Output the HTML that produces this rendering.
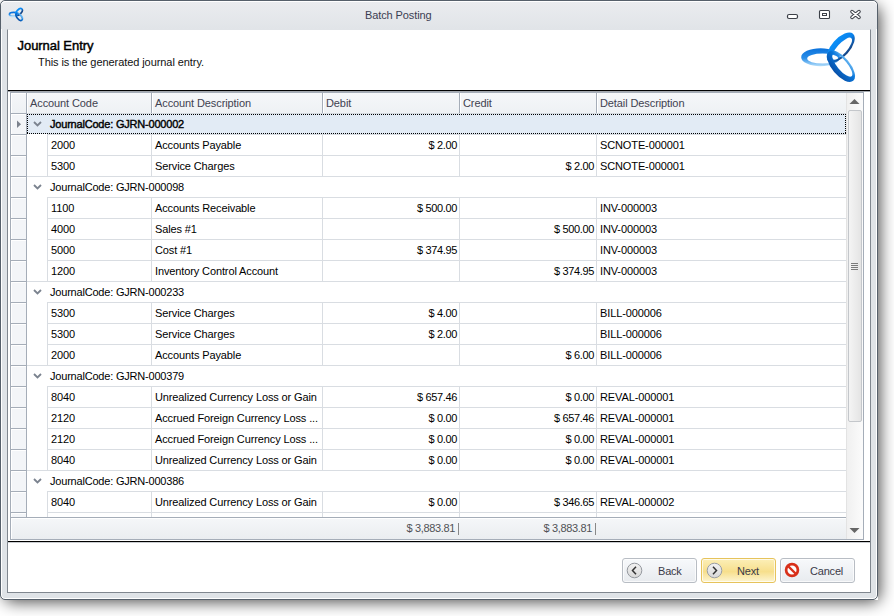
<!DOCTYPE html>
<html><head><meta charset="utf-8">
<style>
*{margin:0;padding:0;box-sizing:border-box}
html,body{width:894px;height:616px;overflow:hidden;background:#fff;font-family:"Liberation Sans",sans-serif;font-size:11px;color:#1b1b1b}
.abs{position:absolute}
#win{position:absolute;left:0;top:0;width:878px;height:600px;border:1px solid #56606b;border-radius:5px;background:#dfe3e7;box-shadow:inset 0 0 0 1px #fff}
#title{position:absolute;left:0;top:0;width:876px;height:28px;border-top:1px solid #fff;background:linear-gradient(#eaecef,#e1e4e8);border-radius:5px 5px 0 0}
#ttext{position:absolute;left:365px;top:9px;font-size:11px;color:#3b3d52;letter-spacing:-0.1px}
#inner{position:absolute;left:7px;top:29px;width:864px;height:564px;background:#fff;border:1px solid #80878f;border-top-color:#e1e4e8}
#sep1{position:absolute;left:8px;top:90px;width:862px;height:1px;background:#000}
#sep1b{position:absolute;left:8px;top:91px;width:862px;height:1px;background:#a3a8ae}
#sep2{position:absolute;left:8px;top:541px;width:862px;height:1px;background:#000}
#sep2b{position:absolute;left:8px;top:542px;width:862px;height:1px;background:#c9ccd0}
#grid{position:absolute;left:10px;top:92px;width:854px;height:448px;border:1px solid #a5adb8;background:#fff}
#hdr{position:absolute;left:11px;top:93px;width:835px;height:20px;background:linear-gradient(#f5f7f9,#eef1f4)}
.hc{position:absolute;top:0;height:20px;border-left:1px solid #a5adb8;padding-left:3px;padding-top:1px;line-height:19px;color:#3f4250;letter-spacing:-0.1px;box-shadow:inset 1px 0 0 #fff}
#data{position:absolute;left:0;top:0;width:846px;height:517px;overflow:hidden}
.ind{position:absolute;left:11px;width:16px;height:21px;background:#f3f5f8;border-top:1px solid #a5adb8;border-right:1px solid #a5adb8;box-shadow:inset 1px 1px 0 #fff}
.grp{position:absolute;left:27px;width:819px;height:20px}
.sel{background:#e2ebf5}
.gt{position:absolute;left:50px;height:20px;line-height:20px;color:#000;letter-spacing:-0.2px}
.gt.b{-webkit-text-stroke:0.4px #000}
.dh{position:absolute;height:1px;background:repeating-linear-gradient(to right,#000 0 1px,transparent 1px 2px)}
.dv{position:absolute;width:1px;background:repeating-linear-gradient(to bottom,#000 0 1px,transparent 1px 2px)}
.t{position:absolute;height:20px;line-height:20px;white-space:nowrap;color:#000;letter-spacing:-0.12px}
.r{text-align:right;padding-right:1px;letter-spacing:-0.35px}
.hl{position:absolute;height:1px;background:#d9dde2}
.vl{position:absolute;width:1px;height:21px;background:#d9dde2}
#foot{position:absolute;left:11px;top:517px;width:835px;height:22px;border-top:1px solid #a5adb8;background:linear-gradient(#f5f7f9,#eaedf0);box-shadow:inset 1px 1px 0 #fff}
.ft{position:absolute;top:0;height:21px;line-height:21px;color:#505256;text-align:right;letter-spacing:-0.35px}
#sb{position:absolute;left:846px;top:93px;width:17px;height:446px;background:linear-gradient(to right,#f0f0f0,#fbfbfb);border-left:1px solid #e3e3e3}
.btn{position:absolute;top:558px;width:75px;height:25px;border:1px solid #b8bdc4;border-radius:3px;background:linear-gradient(#f7f9fb,#e8ebef);box-shadow:inset 0 0 0 1px rgba(255,255,255,0.7)}
.btn .bt{position:absolute;top:1px;height:23px;line-height:23px;color:#3a3a48;font-size:11px;letter-spacing:-0.2px}
</style></head><body>
<div id="shadow" style="position:absolute;left:4px;top:6px;width:876px;height:596px;border-radius:8px;background:rgba(0,0,0,0.7);filter:blur(8px)"></div>
<div style="position:absolute;left:874px;top:596px;width:4px;height:4px;background:#fff"></div>
<div id="win">
 <div id="title"></div>
</div>
<div id="ttext">Batch Posting</div>
<!-- small logo icon -->
<svg width="0" height="0" style="position:absolute">
 <defs>
  <linearGradient id="lg1" x1="0" y1="0" x2="0" y2="1"><stop offset="0" stop-color="#0a72dc"/><stop offset="0.55" stop-color="#2a8ee8"/><stop offset="1" stop-color="#b4defa"/></linearGradient>
  <linearGradient id="lg2" x1="0" y1="0" x2="0" y2="1"><stop offset="0" stop-color="#0a90f8"/><stop offset="0.55" stop-color="#0a80ea"/><stop offset="1" stop-color="#173f7c"/></linearGradient>
  <linearGradient id="lg3" x1="0" y1="0" x2="0" y2="1"><stop offset="0" stop-color="#6ab8f2"/><stop offset="0.35" stop-color="#0a78dc"/><stop offset="1" stop-color="#0850a8"/></linearGradient>
  <g id="logo">
   <path fill="url(#lg1)" fill-rule="evenodd" d="M801.2 57.2 a19.4 9 0 1 0 38.8 0 a19.4 9 0 1 0 -38.8 0 Z M807.2 58.6 a15.5 5.0 0 1 0 31 0 a15.5 5.0 0 1 0 -31 0 Z"/>
   <g transform="translate(840.75 47.5) rotate(-48.4)">
    <path fill="url(#lg2)" fill-rule="evenodd" d="M-18.5 0 a18.5 9 0 1 0 37 0 a18.5 9 0 1 0 -37 0 Z M-14 1.7 a14 5.0 0 1 0 28 0 a14 5.0 0 1 0 -28 0 Z"/>
   </g>
   <g transform="translate(841 66.25) rotate(49.9)">
    <path fill="url(#lg3)" fill-rule="evenodd" d="M-19 0 a19 9 0 1 0 38 0 a19 9 0 1 0 -38 0 Z M-14.5 -1.7 a14.5 5.0 0 1 0 29 0 a14.5 5.0 0 1 0 -29 0 Z"/>
   </g>
  </g>
 </defs>
</svg>
<svg class="abs" style="left:6px;top:6px" width="20" height="18" viewBox="6 6 20 18">
 <ellipse cx="13.73" cy="14.45" rx="4.3" ry="2.0" fill="none" stroke="url(#lg1)" stroke-width="1.7"/>
 <ellipse cx="19.09" cy="11.9" rx="4.1" ry="2.25" transform="rotate(-48.4 19.09 11.9)" fill="none" stroke="url(#lg2)" stroke-width="1.7"/>
 <ellipse cx="19.16" cy="16.85" rx="4.2" ry="2.25" transform="rotate(49.9 19.16 16.85)" fill="none" stroke="url(#lg3)" stroke-width="1.7"/>
</svg>
<!-- window buttons -->
<svg class="abs" style="left:786px;top:13px" width="13" height="7"><rect x="1.5" y="1.5" width="10" height="4" rx="1.5" fill="#fff" stroke="#3c4048" stroke-width="1.2"/></svg>
<svg class="abs" style="left:818px;top:9px" width="13" height="11"><rect x="1.5" y="1.5" width="10" height="8" rx="1" fill="#fff" stroke="#3c4048" stroke-width="1.1"/><rect x="4.5" y="4.5" width="4" height="2" fill="#fff" stroke="#3c4048" stroke-width="1"/></svg>
<svg class="abs" style="left:849px;top:9px" width="13" height="11"><path d="M3 2.6 L10 8.4 M3 8.4 L10 2.6" fill="none" stroke="#3c4048" stroke-width="3.6" stroke-linecap="round"/><path d="M3 2.6 L10 8.4 M3 8.4 L10 2.6" fill="none" stroke="#fff" stroke-width="1.5" stroke-linecap="round"/></svg>
<div id="inner"></div>
<div class="abs" style="left:17.5px;top:38px;font-size:13px;color:#000;-webkit-text-stroke:0.45px #000;letter-spacing:-0.05px">Journal Entry</div>
<div class="abs" style="left:38px;top:56px;font-size:11px;color:#111;letter-spacing:-0.07px">This is the generated journal entry.</div>
<!-- big logo -->
<svg class="abs" style="left:798px;top:29px" width="60" height="57" viewBox="798 29 60 57"><use href="#logo"/></svg>
<div id="sep1"></div><div id="sep1b"></div>
<div id="grid"></div>
<div id="hdr">
 <div class="hc" style="left:0;width:16px;border-left:none;box-shadow:inset 1px 1px 0 #fff"></div>
 <div class="hc" style="left:15px;width:125px">Account Code</div>
 <div class="hc" style="left:140px;width:171px">Account Description</div>
 <div class="hc" style="left:311px;width:137px">Debit</div>
 <div class="hc" style="left:448px;width:137px">Credit</div>
 <div class="hc" style="left:585px;width:250px">Detail Description</div>
</div>
<div id="data">
<div class="hl" style="left:27px;width:819px;top:113px;background:#d3d8de"></div>
<div class="ind" style="top:113px"></div>
<svg class="abs" style="left:16px;top:119px" width="6" height="10"><path d="M1 1.5 L5 5.2 L1 9 Z" fill="#7b828d"/></svg>
<div class="grp sel" style="top:114px"></div>
<div class="dh" style="left:27px;top:114px;width:819px"></div><div class="dh" style="left:27px;top:133px;width:819px"></div><div class="dv" style="left:27px;top:114px;height:20px"></div><div class="dv" style="left:845px;top:114px;height:20px"></div>
<svg class="abs chev" style="left:33px;top:121px" width="9" height="6"><path d="M1 1 L4.5 4.5 L8 1" fill="none" stroke="#7b838f" stroke-width="1.8"/></svg>
<div class="gt b" style="top:114px">JournalCode: GJRN-000002</div>
<div class="hl" style="left:47px;width:799px;top:134px"></div>
<div class="ind" style="top:134px"></div>
<div class="vl" style="left:47px;top:134px"></div>
<div class="vl" style="left:151px;top:134px"></div>
<div class="vl" style="left:322px;top:134px"></div>
<div class="vl" style="left:459px;top:134px"></div>
<div class="vl" style="left:596px;top:134px"></div>
<div class="t" style="left:51px;top:135px">2000</div>
<div class="t" style="left:155px;top:135px">Accounts Payable</div>
<div class="t r" style="left:322px;width:136px;top:135px">$ 2.00</div>
<div class="t r" style="left:459px;width:136px;top:135px"></div>
<div class="t" style="left:600px;top:135px">SCNOTE-000001</div>
<div class="hl" style="left:47px;width:799px;top:155px"></div>
<div class="ind" style="top:155px"></div>
<div class="vl" style="left:47px;top:155px"></div>
<div class="vl" style="left:151px;top:155px"></div>
<div class="vl" style="left:322px;top:155px"></div>
<div class="vl" style="left:459px;top:155px"></div>
<div class="vl" style="left:596px;top:155px"></div>
<div class="t" style="left:51px;top:156px">5300</div>
<div class="t" style="left:155px;top:156px">Service Charges</div>
<div class="t r" style="left:322px;width:136px;top:156px"></div>
<div class="t r" style="left:459px;width:136px;top:156px">$ 2.00</div>
<div class="t" style="left:600px;top:156px">SCNOTE-000001</div>
<div class="hl" style="left:27px;width:819px;top:176px"></div>
<div class="ind" style="top:176px"></div>
<svg class="abs chev" style="left:33px;top:184px" width="9" height="6"><path d="M1 1 L4.5 4.5 L8 1" fill="none" stroke="#7b838f" stroke-width="1.8"/></svg>
<div class="gt" style="top:177px">JournalCode: GJRN-000098</div>
<div class="hl" style="left:47px;width:799px;top:197px"></div>
<div class="ind" style="top:197px"></div>
<div class="vl" style="left:47px;top:197px"></div>
<div class="vl" style="left:151px;top:197px"></div>
<div class="vl" style="left:322px;top:197px"></div>
<div class="vl" style="left:459px;top:197px"></div>
<div class="vl" style="left:596px;top:197px"></div>
<div class="t" style="left:51px;top:198px">1100</div>
<div class="t" style="left:155px;top:198px">Accounts Receivable</div>
<div class="t r" style="left:322px;width:136px;top:198px">$ 500.00</div>
<div class="t r" style="left:459px;width:136px;top:198px"></div>
<div class="t" style="left:600px;top:198px">INV-000003</div>
<div class="hl" style="left:47px;width:799px;top:218px"></div>
<div class="ind" style="top:218px"></div>
<div class="vl" style="left:47px;top:218px"></div>
<div class="vl" style="left:151px;top:218px"></div>
<div class="vl" style="left:322px;top:218px"></div>
<div class="vl" style="left:459px;top:218px"></div>
<div class="vl" style="left:596px;top:218px"></div>
<div class="t" style="left:51px;top:219px">4000</div>
<div class="t" style="left:155px;top:219px">Sales #1</div>
<div class="t r" style="left:322px;width:136px;top:219px"></div>
<div class="t r" style="left:459px;width:136px;top:219px">$ 500.00</div>
<div class="t" style="left:600px;top:219px">INV-000003</div>
<div class="hl" style="left:47px;width:799px;top:239px"></div>
<div class="ind" style="top:239px"></div>
<div class="vl" style="left:47px;top:239px"></div>
<div class="vl" style="left:151px;top:239px"></div>
<div class="vl" style="left:322px;top:239px"></div>
<div class="vl" style="left:459px;top:239px"></div>
<div class="vl" style="left:596px;top:239px"></div>
<div class="t" style="left:51px;top:240px">5000</div>
<div class="t" style="left:155px;top:240px">Cost #1</div>
<div class="t r" style="left:322px;width:136px;top:240px">$ 374.95</div>
<div class="t r" style="left:459px;width:136px;top:240px"></div>
<div class="t" style="left:600px;top:240px">INV-000003</div>
<div class="hl" style="left:47px;width:799px;top:260px"></div>
<div class="ind" style="top:260px"></div>
<div class="vl" style="left:47px;top:260px"></div>
<div class="vl" style="left:151px;top:260px"></div>
<div class="vl" style="left:322px;top:260px"></div>
<div class="vl" style="left:459px;top:260px"></div>
<div class="vl" style="left:596px;top:260px"></div>
<div class="t" style="left:51px;top:261px">1200</div>
<div class="t" style="left:155px;top:261px">Inventory Control Account</div>
<div class="t r" style="left:322px;width:136px;top:261px"></div>
<div class="t r" style="left:459px;width:136px;top:261px">$ 374.95</div>
<div class="t" style="left:600px;top:261px">INV-000003</div>
<div class="hl" style="left:27px;width:819px;top:281px"></div>
<div class="ind" style="top:281px"></div>
<svg class="abs chev" style="left:33px;top:289px" width="9" height="6"><path d="M1 1 L4.5 4.5 L8 1" fill="none" stroke="#7b838f" stroke-width="1.8"/></svg>
<div class="gt" style="top:282px">JournalCode: GJRN-000233</div>
<div class="hl" style="left:47px;width:799px;top:302px"></div>
<div class="ind" style="top:302px"></div>
<div class="vl" style="left:47px;top:302px"></div>
<div class="vl" style="left:151px;top:302px"></div>
<div class="vl" style="left:322px;top:302px"></div>
<div class="vl" style="left:459px;top:302px"></div>
<div class="vl" style="left:596px;top:302px"></div>
<div class="t" style="left:51px;top:303px">5300</div>
<div class="t" style="left:155px;top:303px">Service Charges</div>
<div class="t r" style="left:322px;width:136px;top:303px">$ 4.00</div>
<div class="t r" style="left:459px;width:136px;top:303px"></div>
<div class="t" style="left:600px;top:303px">BILL-000006</div>
<div class="hl" style="left:47px;width:799px;top:323px"></div>
<div class="ind" style="top:323px"></div>
<div class="vl" style="left:47px;top:323px"></div>
<div class="vl" style="left:151px;top:323px"></div>
<div class="vl" style="left:322px;top:323px"></div>
<div class="vl" style="left:459px;top:323px"></div>
<div class="vl" style="left:596px;top:323px"></div>
<div class="t" style="left:51px;top:324px">5300</div>
<div class="t" style="left:155px;top:324px">Service Charges</div>
<div class="t r" style="left:322px;width:136px;top:324px">$ 2.00</div>
<div class="t r" style="left:459px;width:136px;top:324px"></div>
<div class="t" style="left:600px;top:324px">BILL-000006</div>
<div class="hl" style="left:47px;width:799px;top:344px"></div>
<div class="ind" style="top:344px"></div>
<div class="vl" style="left:47px;top:344px"></div>
<div class="vl" style="left:151px;top:344px"></div>
<div class="vl" style="left:322px;top:344px"></div>
<div class="vl" style="left:459px;top:344px"></div>
<div class="vl" style="left:596px;top:344px"></div>
<div class="t" style="left:51px;top:345px">2000</div>
<div class="t" style="left:155px;top:345px">Accounts Payable</div>
<div class="t r" style="left:322px;width:136px;top:345px"></div>
<div class="t r" style="left:459px;width:136px;top:345px">$ 6.00</div>
<div class="t" style="left:600px;top:345px">BILL-000006</div>
<div class="hl" style="left:27px;width:819px;top:365px"></div>
<div class="ind" style="top:365px"></div>
<svg class="abs chev" style="left:33px;top:373px" width="9" height="6"><path d="M1 1 L4.5 4.5 L8 1" fill="none" stroke="#7b838f" stroke-width="1.8"/></svg>
<div class="gt" style="top:366px">JournalCode: GJRN-000379</div>
<div class="hl" style="left:47px;width:799px;top:386px"></div>
<div class="ind" style="top:386px"></div>
<div class="vl" style="left:47px;top:386px"></div>
<div class="vl" style="left:151px;top:386px"></div>
<div class="vl" style="left:322px;top:386px"></div>
<div class="vl" style="left:459px;top:386px"></div>
<div class="vl" style="left:596px;top:386px"></div>
<div class="t" style="left:51px;top:387px">8040</div>
<div class="t" style="left:155px;top:387px">Unrealized Currency Loss or Gain</div>
<div class="t r" style="left:322px;width:136px;top:387px">$ 657.46</div>
<div class="t r" style="left:459px;width:136px;top:387px">$ 0.00</div>
<div class="t" style="left:600px;top:387px">REVAL-000001</div>
<div class="hl" style="left:47px;width:799px;top:407px"></div>
<div class="ind" style="top:407px"></div>
<div class="vl" style="left:47px;top:407px"></div>
<div class="vl" style="left:151px;top:407px"></div>
<div class="vl" style="left:322px;top:407px"></div>
<div class="vl" style="left:459px;top:407px"></div>
<div class="vl" style="left:596px;top:407px"></div>
<div class="t" style="left:51px;top:408px">2120</div>
<div class="t" style="left:155px;top:408px">Accrued Foreign Currency Loss ...</div>
<div class="t r" style="left:322px;width:136px;top:408px">$ 0.00</div>
<div class="t r" style="left:459px;width:136px;top:408px">$ 657.46</div>
<div class="t" style="left:600px;top:408px">REVAL-000001</div>
<div class="hl" style="left:47px;width:799px;top:428px"></div>
<div class="ind" style="top:428px"></div>
<div class="vl" style="left:47px;top:428px"></div>
<div class="vl" style="left:151px;top:428px"></div>
<div class="vl" style="left:322px;top:428px"></div>
<div class="vl" style="left:459px;top:428px"></div>
<div class="vl" style="left:596px;top:428px"></div>
<div class="t" style="left:51px;top:429px">2120</div>
<div class="t" style="left:155px;top:429px">Accrued Foreign Currency Loss ...</div>
<div class="t r" style="left:322px;width:136px;top:429px">$ 0.00</div>
<div class="t r" style="left:459px;width:136px;top:429px">$ 0.00</div>
<div class="t" style="left:600px;top:429px">REVAL-000001</div>
<div class="hl" style="left:47px;width:799px;top:449px"></div>
<div class="ind" style="top:449px"></div>
<div class="vl" style="left:47px;top:449px"></div>
<div class="vl" style="left:151px;top:449px"></div>
<div class="vl" style="left:322px;top:449px"></div>
<div class="vl" style="left:459px;top:449px"></div>
<div class="vl" style="left:596px;top:449px"></div>
<div class="t" style="left:51px;top:450px">8040</div>
<div class="t" style="left:155px;top:450px">Unrealized Currency Loss or Gain</div>
<div class="t r" style="left:322px;width:136px;top:450px">$ 0.00</div>
<div class="t r" style="left:459px;width:136px;top:450px">$ 0.00</div>
<div class="t" style="left:600px;top:450px">REVAL-000001</div>
<div class="hl" style="left:27px;width:819px;top:470px"></div>
<div class="ind" style="top:470px"></div>
<svg class="abs chev" style="left:33px;top:478px" width="9" height="6"><path d="M1 1 L4.5 4.5 L8 1" fill="none" stroke="#7b838f" stroke-width="1.8"/></svg>
<div class="gt" style="top:471px">JournalCode: GJRN-000386</div>
<div class="hl" style="left:47px;width:799px;top:491px"></div>
<div class="ind" style="top:491px"></div>
<div class="vl" style="left:47px;top:491px"></div>
<div class="vl" style="left:151px;top:491px"></div>
<div class="vl" style="left:322px;top:491px"></div>
<div class="vl" style="left:459px;top:491px"></div>
<div class="vl" style="left:596px;top:491px"></div>
<div class="t" style="left:51px;top:492px">8040</div>
<div class="t" style="left:155px;top:492px">Unrealized Currency Loss or Gain</div>
<div class="t r" style="left:322px;width:136px;top:492px">$ 0.00</div>
<div class="t r" style="left:459px;width:136px;top:492px">$ 346.65</div>
<div class="t" style="left:600px;top:492px">REVAL-000002</div>
<div class="hl" style="left:47px;width:799px;top:512px"></div>
<div class="ind" style="top:512px"></div>
<div class="vl" style="left:47px;top:512px"></div>
<div class="vl" style="left:151px;top:512px"></div>
<div class="vl" style="left:322px;top:512px"></div>
<div class="vl" style="left:459px;top:512px"></div>
<div class="vl" style="left:596px;top:512px"></div>
<div class="t" style="left:51px;top:513px"></div>
<div class="t" style="left:155px;top:513px"></div>
<div class="t r" style="left:322px;width:136px;top:513px"></div>
<div class="t r" style="left:459px;width:136px;top:513px"></div>
<div class="t" style="left:600px;top:513px"></div>
<div class="hl" style="left:27px;width:819px;top:533px"></div>
</div>
<div id="foot">
 <div class="ft" style="left:311px;width:133px">$ 3,883.81</div>
 <div class="abs" style="left:447px;top:5px;width:1px;height:12px;background:#888"></div>
 <div class="ft" style="left:448px;width:133px">$ 3,883.81</div>
 <div class="abs" style="left:584px;top:5px;width:1px;height:12px;background:#888"></div>
</div>
<div id="sb">
 <svg class="abs" style="left:2px;top:5px" width="11" height="7"><path d="M0.5 6 L5.5 1 L10.5 6 Z" fill="#666"/></svg>
 <div class="abs" style="left:1px;top:17px;width:14px;height:312px;border:1px solid #c4c7cb;border-radius:2px;background:linear-gradient(to right,#f4f4f4,#e4e4e4)"></div>
 <svg class="abs" style="left:4px;top:170px" width="8" height="8"><path d="M0 0.5h7M0 2.5h7M0 4.5h7M0 6.5h7" stroke="#7a7a7a" stroke-width="1"/></svg>
 <svg class="abs" style="left:2px;top:434px" width="11" height="7"><path d="M0.5 1 L5.5 6 L10.5 1 Z" fill="#666"/></svg>
</div>
<div id="sep2"></div><div id="sep2b"></div>
<!-- buttons -->
<div class="btn" style="left:622px">
 <svg class="abs" style="left:3.3px;top:3.3px" width="17" height="17"><circle cx="8.5" cy="8.5" r="7.3" fill="url(#cg)" stroke="#94989e" stroke-width="1"/><path d="M10 4.8 L6.5 8.5 L10 12.2" fill="none" stroke="#333" stroke-width="1.5"/><defs><linearGradient id="cg" x1="0" y1="0" x2="0" y2="1"><stop offset="0" stop-color="#f2f2f2"/><stop offset="1" stop-color="#d8d8d8"/></linearGradient></defs></svg>
 <div class="bt" style="left:35px">Back</div>
</div>
<div class="btn" style="left:701px;border-color:#e6c35b;background:linear-gradient(#fcefb8,#f7df8c 55%,#fdf5d2)">
 <svg class="abs" style="left:4px;top:3px" width="17" height="17"><circle cx="8.5" cy="8.5" r="7.3" fill="url(#cg)" stroke="#9a9ea4" stroke-width="1"/><path d="M7 4.8 L10.5 8.5 L7 12.2" fill="none" stroke="#333" stroke-width="1.5"/></svg>
 <div class="bt" style="left:35px">Next</div>
</div>
<div class="btn" style="left:780px">
 <svg class="abs" style="left:3px;top:3px" width="17" height="17"><circle cx="8" cy="8" r="5.9" fill="#fff" stroke="#d8301a" stroke-width="2.7"/><path d="M4 4 L12 12" stroke="#d8301a" stroke-width="2.4"/></svg>
 <div class="bt" style="left:29px">Cancel</div>
</div>
</body></html>
